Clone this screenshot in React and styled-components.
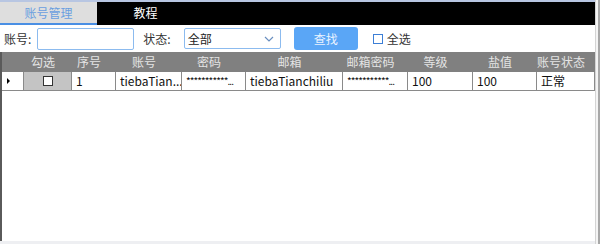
import styled, { createGlobalStyle } from "styled-components";

const GlobalStyle = createGlobalStyle`
  body {
    margin: 0;
    background: #fff;
    font-family: "Noto Sans CJK SC", "Noto Sans", sans-serif;
  }
`;

const cols = "22px 48px 44px 66px 64px 97px 65px 65px 64px 58px";

const Window = styled.div`
  width: 600px;
  height: 244px;
  display: flex;
  background: #fff;
  overflow: hidden;
`;

const Main = styled.div`
  flex: 1;
  display: flex;
  flex-direction: column;
`;

const Edge = styled.div`
  width: 5px;
  border-left: 1px solid #d4d4d4;
  border-right: 2px solid #a8a8a8;
  background: #f4f4f4;
`;

const TopLine = styled.div`
  height: 2px;
  background: #b8c6e2;
`;

const TabBar = styled.div`
  display: flex;
  height: 23px;
  background: #000;
`;

const Tab = styled.div`
  width: 97px;
  display: flex;
  align-items: center;
  justify-content: center;
  font-size: 12px;
  line-height: 1;
  box-sizing: border-box;
  color: ${(p) => (p.active ? "#6a9fe0" : "#fff")};
  background: ${(p) => (p.active ? "#dedede" : "#000")};
  border-bottom: 2px solid ${(p) => (p.active ? "#4a8fe4" : "#000")};
`;

const Toolbar = styled.div`
  height: 27px;
  display: flex;
  align-items: center;
  padding-left: 4px;
  font-size: 12px;
  color: #333;
`;

const Label = styled.span`
  margin-right: ${(p) => p.gap}px;
`;

const Input = styled.div`
  width: 97px;
  height: 22px;
  box-sizing: border-box;
  border: 1px solid #8cbbef;
  border-radius: 2px;
  margin-right: 9px;
`;

const Select = styled.div`
  width: 97px;
  height: 21px;
  box-sizing: border-box;
  border: 1px solid #8cbbef;
  border-radius: 2px;
  display: flex;
  align-items: center;
  justify-content: space-between;
  padding: 0 6px 0 3px;
  margin-right: 13px;
  color: #222;
`;

const Button = styled.div`
  width: 64px;
  height: 23px;
  border-radius: 3px;
  background: #5aa6f6;
  color: #eaf3ff;
  display: flex;
  align-items: center;
  justify-content: center;
  font-size: 12px;
  margin-right: 15px;
`;

const Check = styled.span`
  width: ${(p) => p.size}px;
  height: ${(p) => p.size}px;
  box-sizing: border-box;
  border: 1px solid ${(p) => p.color};
  background: #fff;
  display: inline-block;
`;

const CheckLabel = styled.span`
  margin-left: 4px;
`;

const Grid = styled.div`
  flex: 1;
  border-left: 2px solid #5a5a5a;
  display: flex;
  flex-direction: column;
`;

const HeaderRow = styled.div`
  display: grid;
  grid-template-columns: ${cols};
  height: 20px;
  background: #808080;
  color: #e4e4e4;
  font-size: 12px;
  line-height: 1;
`;

const HeadCell = styled.div`
  display: flex;
  align-items: center;
  justify-content: center;
  padding-right: 10px;
  white-space: nowrap;
  min-width: 0;
`;

const DataRow = styled.div`
  display: grid;
  grid-template-columns: ${cols};
  height: 19px;
  box-sizing: border-box;
  border-bottom: 1px solid #8a8a8a;
  font-size: 12px;
  line-height: 1;
  color: #111;
`;

const Cell = styled.div`
  box-sizing: border-box;
  border-right: 1px solid #8a8a8a;
  background: ${(p) => (p.shade ? "#c4c4c4" : "#fff")};
  display: flex;
  align-items: center;
  justify-content: ${(p) => (p.center ? "center" : "flex-start")};
  padding-left: ${(p) => (p.center ? 0 : 4)}px;
  white-space: nowrap;
  overflow: hidden;
  min-width: 0;
  font-size: ${(p) => (p.masked ? 10 : 12)}px;
  letter-spacing: ${(p) => (p.masked ? "-0.9px" : "normal")};
`;

const Arrow = styled.span`
  width: 0;
  height: 0;
  margin-left: 1px;
  border-top: 3px solid transparent;
  border-bottom: 3px solid transparent;
  border-left: 3px solid #000;
`;

const Blank = styled.div`
  flex: 1;
  background: #fff;
`;

const BottomBar = styled.div`
  height: 3px;
  background: #eeeff2;
`;

const headers = ["", "勾选", "序号", "账号", "密码", "邮箱", "邮箱密码", "等级", "盐值", "账号状态"];
const row = [
  { v: "1" },
  { v: "tiebaTian..." },
  { v: "***********...", masked: true },
  { v: "tiebaTianchiliu" },
  { v: "***********...", masked: true },
  { v: "100" },
  { v: "100" },
  { v: "正常" },
];

export default function App() {
  return (
    <>
      <GlobalStyle />
      <Window>
        <Main>
          <TopLine />
          <TabBar>
            <Tab active>账号管理</Tab>
            <Tab>教程</Tab>
          </TabBar>
          <Toolbar>
            <Label gap={6}>账号:</Label>
            <Input />
            <Label gap={13}>状态:</Label>
            <Select>
              <span>全部</span>
              <svg width="10" height="6" viewBox="0 0 10 6">
                <path d="M1 1l4 4 4-4" fill="none" stroke="#6a8fc0" strokeWidth="1.2" />
              </svg>
            </Select>
            <Button>查找</Button>
            <Check size={10} color="#3d7fd6" />
            <CheckLabel>全选</CheckLabel>
          </Toolbar>
          <Grid>
            <HeaderRow>
              {headers.map((h, i) => (
                <HeadCell key={i}>{h}</HeadCell>
              ))}
            </HeaderRow>
            <DataRow>
              <Cell>
                <Arrow />
              </Cell>
              <Cell shade center>
                <Check size={10} color="#333" />
              </Cell>
              {row.map((c, i) => (
                <Cell key={i} masked={c.masked}>
                  {c.v}
                </Cell>
              ))}
            </DataRow>
            <Blank />
          </Grid>
          <BottomBar />
        </Main>
        <Edge />
      </Window>
    </>
  );
}
